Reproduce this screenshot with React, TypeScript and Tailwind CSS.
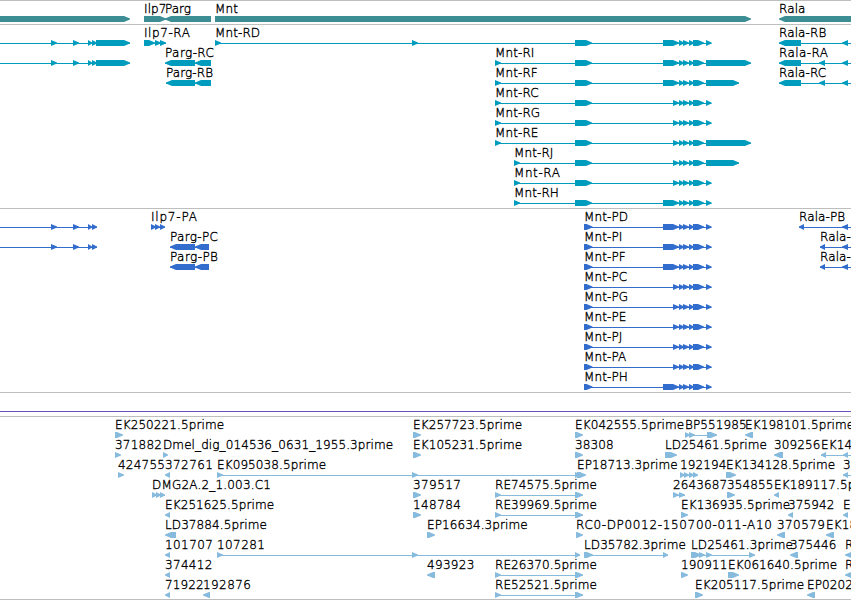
type Strand = 1 | -1;

type Span = [number, number];

interface Feature {
  // exon start/end pairs, in track pixels
  blocks: Span[];
  label?: string;
  labelWidth?: number;
  strand?: Strand;
}

const TRACK_WIDTH = 851;
const ROW_HEIGHT = 20;
const HEAD = 6;

const MNT_TAIL: Span[] = [[679, 684], [683, 689], [689, 694], [693, 704]];
const SHORT: Span[] = [[673, 679], ...MNT_TAIL];
const LONG: Span[] = [[663, 679], ...MNT_TAIL];
const EXON_2: Span = [575, 592];

const f = (label: string, blocks: Span[], strand: Strand = 1, labelWidth?: number): Feature => ({
  label,
  blocks,
  strand,
  labelWidth,
});

const GENES: Feature[][] = [
  [
    f("", [[-20, 130]]),
    f("Ilp7", [[144, 166]]),
    f("Parg", [[165, 211]], -1, 26),
    f("Mnt", [[215, 751]]),
    f("Rala", [[779, 880]], -1),
  ],
];

const UPSTREAM = f("", [[-20, -10], [51, 57], [73, 79], [88, 92], [92, 97], [96, 130]]);

const TRANSCRIPTS: Feature[][] = [
  [
    UPSTREAM,
    f("Ilp7-RA", [[144, 155], [155, 161], [160, 166]], 1, 46),
    f("Mnt-RD", [[215, 221], [412, 418], EXON_2, ...LONG, [706, 711.5]]),
    f("Rala-RB", [[779, 801], [842, 848], [870, 880]], -1),
  ],
  [
    UPSTREAM,
    f("Parg-RC", [[165, 195], [195, 211]], -1, 49),
    f("Mnt-RI", [[495, 501], EXON_2, ...LONG, [706, 751]]),
    f("Rala-RA", [[779, 801], [819, 825], [842, 848], [870, 880]], -1, 49),
  ],
  [
    f("Parg-RB", [[166, 195], [195, 211]], -1),
    f("Mnt-RF", [[495, 501], EXON_2, ...LONG, [706, 739]]),
    f("Rala-RC", [[779, 801], [819, 825], [842, 848], [870, 880]], -1),
  ],
  [f("Mnt-RC", [[495, 501], EXON_2, ...SHORT, [706, 711.5]])],
  [f("Mnt-RG", [[495, 501], EXON_2, ...SHORT, [706, 711.5]])],
  [f("Mnt-RE", [[495, 501], EXON_2, ...SHORT, [706, 751]])],
  [f("Mnt-RJ", [[514, 520], EXON_2, ...SHORT, [706, 739]])],
  [f("Mnt-RA", [[514, 520], EXON_2, ...SHORT, [706, 711.5]], 1, 46)],
  [f("Mnt-RH", [[514, 520], EXON_2, ...LONG, [706, 711.5]])],
];

const UPSTREAM_CDS = f("", [[-20, -10], [51, 57], [73, 79], [88, 92], [92, 97]]);

const CDS: Feature[][] = [
  [
    UPSTREAM_CDS,
    f("Ilp7-PA", [[151, 156], [155, 160], [160, 165]], 1, 46),
    f("Mnt-PD", [[584, 592.5], ...LONG, [706, 711.5]]),
    f("Rala-PB", [[799, 804], [842, 848], [870, 880]], -1),
  ],
  [
    UPSTREAM_CDS,
    f("Parg-PC", [[170, 195], [195, 209]], -1, 48),
    f("Mnt-PI", [[584, 592.5], ...LONG, [706, 711.5]]),
    f("Rala-PA", [[820, 825], [842, 848], [870, 880]], -1),
  ],
  [
    f("Parg-PB", [[170, 195], [195, 209]], -1, 48),
    f("Mnt-PF", [[584, 592.5], ...LONG, [706, 711.5]]),
    f("Rala-PC", [[820, 825], [842, 848], [870, 880]], -1),
  ],
  [f("Mnt-PC", [[584, 592.5], ...SHORT, [706, 711.5]])],
  [f("Mnt-PG", [[584, 592.5], ...SHORT, [706, 711.5]])],
  [f("Mnt-PE", [[584, 592.5], ...SHORT, [706, 711.5]])],
  [f("Mnt-PJ", [[584, 592.5], ...SHORT, [706, 711.5]])],
  [f("Mnt-PA", [[584, 592.5], ...SHORT, [706, 711.5]])],
  [f("Mnt-PH", [[584, 592.5], ...LONG, [706, 711.5]])],
];

const ESTS: Feature[][] = [
  [
    f("EK250221.5prime", [[115, 123]]),
    f("EK257723.5prime", [[413, 421]]),
    f("EK042555.5prime", [[575, 583]]),
    f("BP551985", [[685, 690], [689, 695], [707, 717]]),
    f("EK198101.5prime", [[745, 753]], -1),
  ],
  [
    f("371882", [[115, 121]], 1, 47),
    f("Dmel_dig_014536_0631_1955.3prime", [[163, 168]]),
    f("EK105231.5prime", [[413, 421]]),
    f("38308", [[575, 583]]),
    f("LD25461.5prime", [[665, 677]]),
    f("309256", [[774, 783]], -1),
    f("EK14", [[821, 826], [843, 848], [870, 880]], -1),
  ],
  [
    f("424755", [[118, 124]], 1, 47),
    f("372761", [[165, 170]], -1, 48),
    f("EK095038.5prime", [[217, 223], [412, 418], [575, 581]]),
    f("EP18713.3prime", [[577, 586]]),
    f("192194", [[680, 685], [684, 689], [689, 694], [693, 698]]),
    f("EK134128.5prime", [[726, 736]]),
    f("3", [[843, 848], [870, 880]], -1),
  ],
  [
    f("DMG2A.2_1.003.C1", [[152, 157], [156, 161], [160, 165]], 1, 119),
    f("379517", [[413, 421]], 1, 48),
    f("RE74575.5prime", [[495, 501], [575, 583]]),
    f("2643687", [[673, 679], [679, 685]]),
    f("354855", [[727, 735]]),
    f("EK189117.5prime", [[774, 779]], -1),
  ],
  [
    f("EK251625.5prime", [[165, 170]], -1),
    f("148784", [[413, 421]], 1, 48),
    f("RE39969.5prime", [[495, 501], [575, 583]]),
    f("EK136935.5prime", [[681, 688]]),
    f("375942", [[788, 793]], -1),
    f("E", [[843, 848]], -1),
  ],
  [
    f("LD37884.5prime", [[165, 176]], -1),
    f("EP16634.3prime", [[427, 435]]),
    f("RC0-DP0012-150700-011-A10", [[576, 583]], 1, 196),
    f("370579", [[777, 785]], -1, 48),
    f("EK18", [[826, 834]], -1),
  ],
  [
    f("101707", [[165, 170]], -1, 48),
    f("107281", [[217, 223], [412, 418], [575, 580]], 1, 48),
    f("LD35782.3prime", [[584, 593], [663, 668]]),
    f("LD25461.3prime", [[691, 701], [699, 705], [706, 712], [749, 755]]),
    f("375446", [[790, 798]], -1),
    f("R", [[845, 851]], -1),
  ],
  [
    f("374412", [[165, 170]], -1, 47.5),
    f("493923", [[427, 435]], -1, 47.5),
    f("RE26370.5prime", [[495, 501], [575, 583]]),
    f("190911", [[681, 688]]),
    f("EK061640.5prime", [[728, 739]]),
    f("R", [[845, 851]], -1),
  ],
  [
    f("71922", [[165, 170]], -1),
    f("192876", [[203, 210]], -1, 48),
    f("RE52521.5prime", [[495, 501], [575, 583]]),
    f("EK205117.5prime", [[695, 703]]),
    f("EP0202", [[807, 815]], -1),
  ],
];

function Block({ x0, x1, y, strand }: { x0: number; x1: number; y: number; strand: Strand }) {
  const head = Math.min(HEAD, x1 - x0);
  const back = strand === 1 ? x0 : x1;
  const neck = strand === 1 ? x1 - head : x0 + head;
  const tip = strand === 1 ? x1 : x0;
  return (
    <polygon
      points={`${back},${y - 3} ${neck},${y - 3} ${tip},${y - 0.5} ${tip},${y + 0.5} ${neck},${y + 3} ${back},${y + 3}`}
    />
  );
}

function FeatureGlyph({ feature, y }: { feature: Feature; y: number }) {
  const { blocks, label, labelWidth, strand = 1 } = feature;
  const start = blocks[0][0];
  const end = blocks[blocks.length - 1][1];
  return (
    <g>
      {blocks.length > 1 && <rect x={start} y={y} width={end - start} height={1} />}
      {blocks.map(([x0, x1]) => (
        <Block key={x0} x0={x0} x1={x1} y={y} strand={strand} />
      ))}
      {label && (
        <text
          x={start}
          y={y - 6}
          textLength={labelWidth}
          strokeLinejoin="round"
          className="fill-black stroke-black stroke-[0.35px]"
        >
          {label}
        </text>
      )}
    </g>
  );
}

function Track({ rows, className }: { rows: Feature[][]; className: string }) {
  return (
    <div className={`overflow-hidden border-t border-[#bebebe] ${className}`}>
      <svg
        width={TRACK_WIDTH}
        height="100%"
        fill="currentColor"
        className="block font-['DejaVu_Sans',sans-serif] text-[12px] font-extralight tracking-[0.1px]"
      >
        {rows.map((row, i) => (
          <g key={i}>
            {row.map((feature, j) => (
              <FeatureGlyph key={j} feature={feature} y={18 + i * ROW_HEIGHT} />
            ))}
          </g>
        ))}
      </svg>
    </div>
  );
}

export default function App() {
  return (
    <div className="flex h-[600px] w-[851px] flex-col overflow-hidden bg-white">
      <Track rows={GENES} className="h-6 text-[#3c8e94]" />
      <Track rows={TRANSCRIPTS} className="h-[184px] text-[#009cbe]" />
      <Track rows={CDS} className="h-[184px] text-[#326ccc]" />
      <div className="h-6 border-t border-[#bebebe] pt-[18px]">
        <div className="h-px bg-[#6f50b8]" />
      </div>
      <Track rows={ESTS} className="h-[184px] border-b text-[#87bbdd]" />
    </div>
  );
}
